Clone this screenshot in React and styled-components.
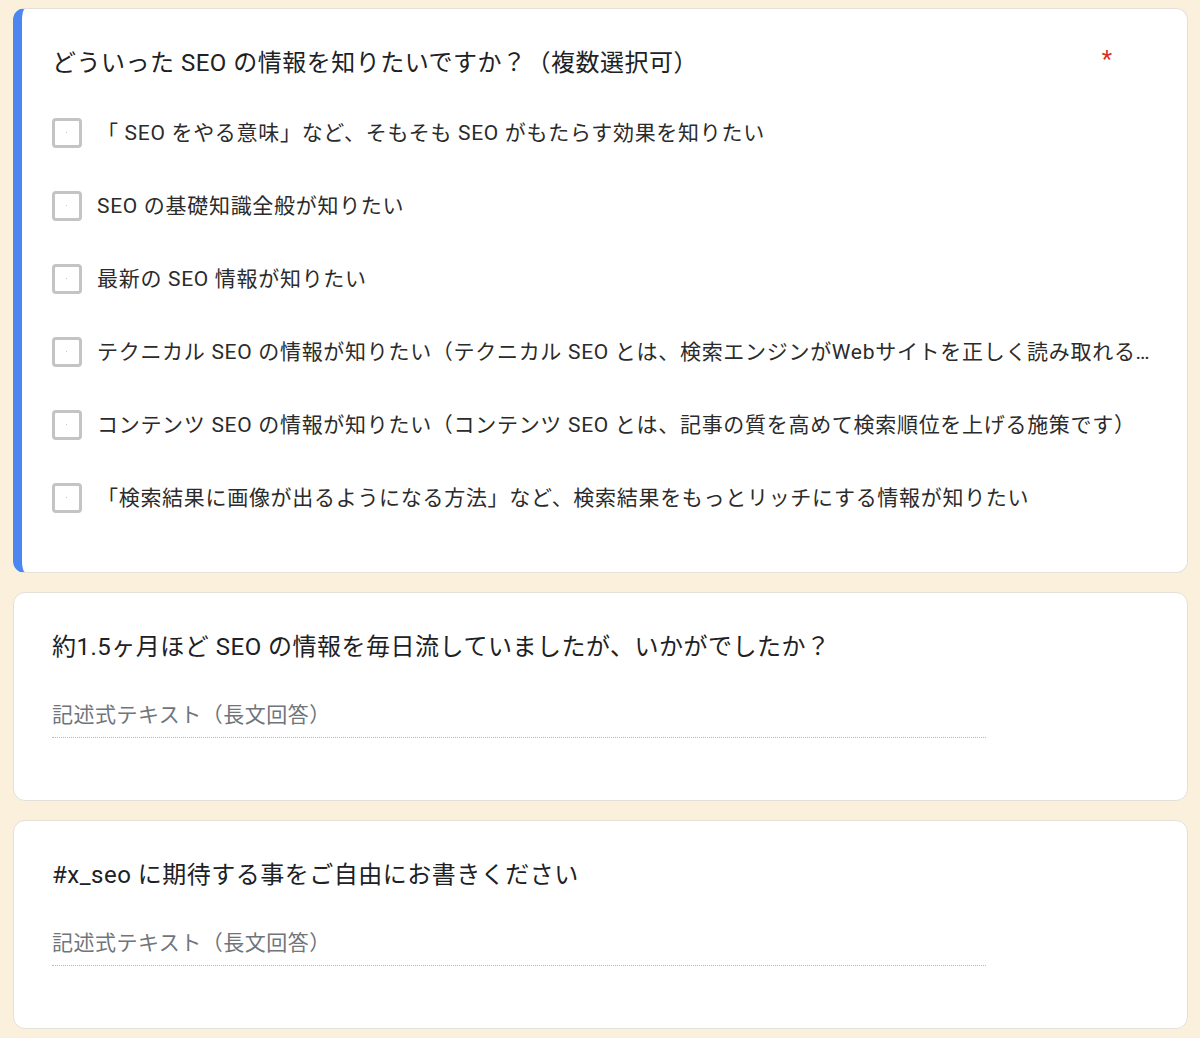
import React from "react"
import styled, { createGlobalStyle } from "styled-components"

const GlobalStyle = createGlobalStyle`
   body {
      margin: 0;
      background: #fbf0dc;
      font-family: Roboto, "Noto Sans CJK JP", sans-serif;
      color: #202124;
   }
`

const options = [
   "「 SEO をやる意味」など、そもそも SEO がもたらす効果を知りたい",
   "SEO の基礎知識全般が知りたい",
   "最新の SEO 情報が知りたい",
   "テクニカル SEO の情報が知りたい（テクニカル SEO とは、検索エンジンがWebサイトを正しく読み取れる…",
   "コンテンツ SEO の情報が知りたい（コンテンツ SEO とは、記事の質を高めて検索順位を上げる施策です）",
   "「検索結果に画像が出るようになる方法」など、検索結果をもっとリッチにする情報が知りたい",
]

const App = () => (
   <Page>
      <GlobalStyle />
      <Card active>
         <TitleRow>
            <Title>どういった SEO の情報を知りたいですか？（複数選択可）</Title>
            <Required>*</Required>
         </TitleRow>
         <OptionList>
            {options.map((label) => (
               <Option key={label}>
                  <Box />
                  <Label>{label}</Label>
               </Option>
            ))}
         </OptionList>
      </Card>
      <Card>
         <TitleRow>
            <Title>約1.5ヶ月ほど SEO の情報を毎日流していましたが、いかがでしたか？</Title>
         </TitleRow>
         <Field>記述式テキスト（長文回答）</Field>
      </Card>
      <Card>
         <TitleRow>
            <Title>#x_seo に期待する事をご自由にお書きください</Title>
         </TitleRow>
         <Field>記述式テキスト（長文回答）</Field>
      </Card>
   </Page>
)

const Page = styled.div`
   display: flex;
   flex-direction: column;
   gap: 19px;
   padding: 8px 12px 10px 13px;
`

const Card = styled.div`
   background: #fff;
   border: 1px solid #e3e0da;
   border-left: ${(p) => (p.active ? "9px solid #4c86f0" : "1px solid #e3e0da")};
   border-radius: 12px;
   padding: ${(p) => (p.active ? "36px 30px 38px 30px" : "36px 40px 62px 38px")};
`

const TitleRow = styled.div`
   display: flex;
   justify-content: space-between;
   align-items: flex-start;
   padding-right: 45px;
`

const Title = styled.div`
   font-size: 24px;
   line-height: 36px;
   letter-spacing: 0.5px;
`

const Required = styled.span`
   color: #d93025;
   font-size: 24px;
   line-height: 28px;
`

const OptionList = styled.div`
   display: flex;
   flex-direction: column;
   margin-top: 15px;
`

const Option = styled.div`
   display: flex;
   align-items: center;
   height: 73px;
   gap: 15px;
   min-width: 0;
`

const Box = styled.span`
   position: relative;
   flex: none;
   width: 24px;
   height: 24px;
   border: 3px solid #c4c4c4;
   border-radius: 4px;

   &::after {
      content: "";
      position: absolute;
      left: 11px;
      top: 11px;
      width: 1px;
      height: 1px;
      background: #c8c8c8;
   }
`

const Label = styled.span`
   font-size: 21px;
   line-height: 30px;
   letter-spacing: 0.7px;
   white-space: nowrap;
   overflow: hidden;
   text-overflow: ellipsis;
   color: #2b2b2b;
`

const Field = styled.div`
   margin-top: 34px;
   width: 934px;
   font-size: 21px;
   line-height: 32px;
   letter-spacing: 0.5px;
   color: #70757a;
   padding-bottom: 6px;
   border-bottom: 1px dotted #b8b8b8;
`

export default App
